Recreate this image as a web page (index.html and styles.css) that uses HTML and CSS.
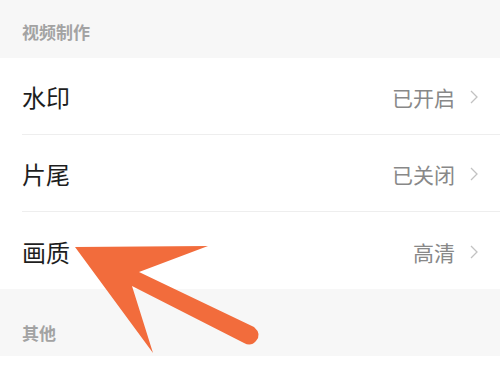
FILE: index.html
```html
<!DOCTYPE html>
<html lang="zh">
<head>
<meta charset="utf-8">
<link rel="stylesheet" href="styles.css">
</head>
<body>
<div class="page">
  <div class="section-title">视频制作</div>
  <div class="card">
    <div class="row">
      <span class="label">水印</span>
      <span class="value">已开启<svg class="chev" viewBox="0 0 8 14"><path d="M1 1 L7 7 L1 13" fill="none" stroke="#c2c2c2" stroke-width="1.3"/></svg></span>
    </div>
    <div class="row">
      <span class="label">片尾</span>
      <span class="value">已关闭<svg class="chev" viewBox="0 0 8 14"><path d="M1 1 L7 7 L1 13" fill="none" stroke="#c2c2c2" stroke-width="1.3"/></svg></span>
    </div>
    <div class="row">
      <span class="label">画质</span>
      <span class="value">高清<svg class="chev" viewBox="0 0 8 14"><path d="M1 1 L7 7 L1 13" fill="none" stroke="#c2c2c2" stroke-width="1.3"/></svg></span>
    </div>
  </div>
  <div class="section-title other">其他</div>
  <div class="card bottom"></div>
  <svg class="arrow" viewBox="0 0 500 375" width="500" height="375">
    <path d="M75 247 L208 246 L139 272 L254 327 Q262 334 256 341 Q251 347 244 343 L132 286 L153 353 Z" fill="#f26c3c"/>
  </svg>
</div>
</body>
</html>
```
FILE: styles.css
```css
* { box-sizing: border-box; }
html, body { margin: 0; padding: 0; }
body {
  width: 500px;
  height: 375px;
  overflow: hidden;
  background: #f7f7f7;
  font-family: "Noto Sans CJK SC", "Noto Sans", sans-serif;
}
.page {
  position: relative;
  width: 500px;
  height: 375px;
}
.section-title {
  height: 58px;
  padding: 19px 0 0 22px;
  font-size: 17px;
  line-height: 26px;
  font-weight: 700;
  color: #a3a3a3;
}
.section-title.other {
  height: 67px;
  padding-top: 31px;
}
.card {
  background: #fff;
}
.card.bottom {
  height: 20px;
}
.row {
  height: 77px;
  margin-left: 22px;
  padding-right: 22px;
  display: flex;
  align-items: center;
  justify-content: space-between;
  border-bottom: 1px solid #eeeeee;
}
.row:last-child { border-bottom: none; }
.label {
  font-size: 24px;
  color: #1e1e1e;
  line-height: 30px;
  padding-top: 2px;
}
.value {
  display: flex;
  align-items: center;
  font-size: 21px;
  color: #888;
  line-height: 28px;
  padding-top: 2px;
}
.chev {
  width: 8px;
  height: 14px;
  margin-left: 15px;
}
.arrow {
  position: absolute;
  left: 0;
  top: 0;
}
```
